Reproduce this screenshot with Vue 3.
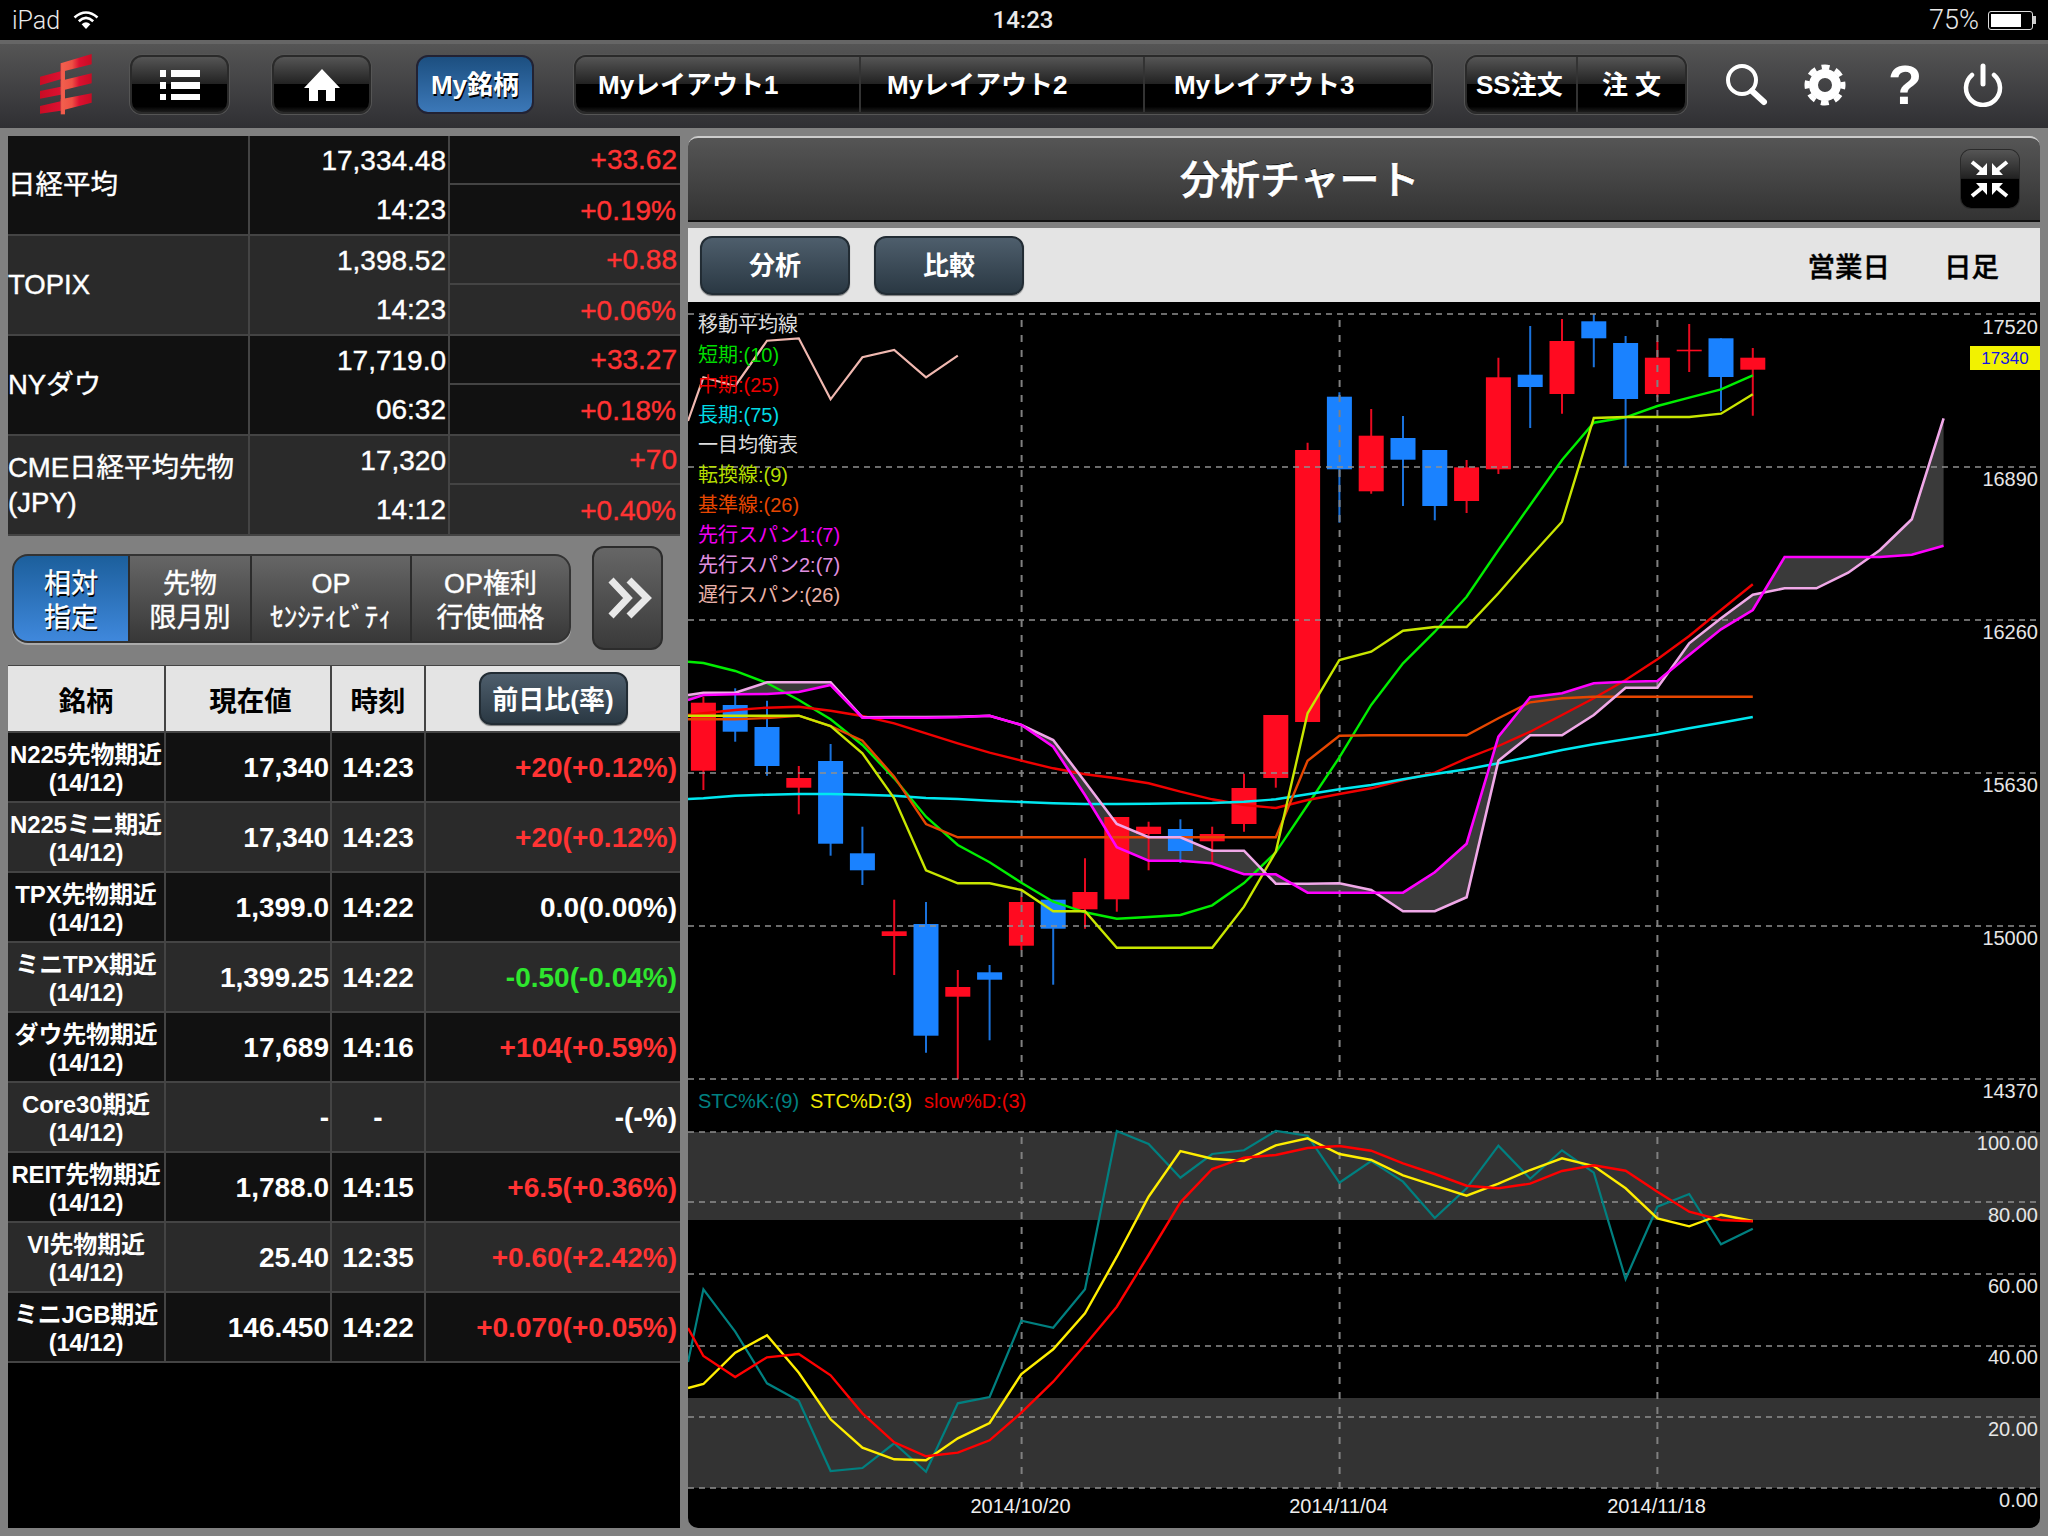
<template>
  <div class="app">
    <!-- status bar -->
    <div class="status">
      <div class="status-left">
        <span>iPad</span>
        <svg class="wifi" width="26" height="18" viewBox="0 0 26 18">
          <path d="M1.5 6.5 Q13 -3.5 24.5 6.5" fill="none" stroke="#fff" stroke-width="2.6" />
          <path d="M5.8 10.2 Q13 3.6 20.2 10.2" fill="none" stroke="#fff" stroke-width="2.6" />
          <path d="M13 18 L8.6 13.2 Q13 9.4 17.4 13.2 Z" fill="#fff" />
        </svg>
      </div>
      <div class="status-time">14:23</div>
      <div class="status-right">
        <span>75%</span>
        <div class="battery"><div class="battery-fill"></div></div>
        <div class="battery-tip"></div>
      </div>
    </div>

    <!-- nav bar -->
    <div class="nav">
      <svg class="logo" width="72" height="76" viewBox="0 0 216 228">
        <defs>
          <linearGradient id="logoGrad" gradientUnits="userSpaceOnUse" x1="30" x2="185" y1="0" y2="0">
            <stop offset="0" stop-color="#c80c24" />
            <stop offset="0.38" stop-color="#dc1030" />
            <stop offset="0.42" stop-color="#f2604e" />
            <stop offset="0.62" stop-color="#ee5044" />
            <stop offset="0.76" stop-color="#dc1030" />
            <stop offset="1" stop-color="#c80c24" />
          </linearGradient>
        </defs>
        <g fill="url(#logoGrad)">
          <path d="M92 52 L185 24 V55 L92 78 Z" />
          <path d="M92 104 L185 82 V112 L92 134 Z" />
          <path d="M92 160 L185 142 V170 L92 194 Z" />
          <path d="M30 92 L92 76 V100 L30 118 Z" />
          <path d="M30 135 L92 122 V146 L30 158 Z" />
          <path d="M30 180 L92 166 V194 L30 203 Z" />
          <path d="M92 52 H105 V205 H92 Z" />
        </g>
      </svg>

      <button class="btn-black list-btn">
        <svg width="40" height="30" viewBox="0 0 40 30">
          <path fill="#fff" d="M0 0h6v7H0zM11 0h29v7H11zM0 12h6v7H0zM11 12h29v7H11zM0 24h6v6H0zM11 24h29v6H11z" />
        </svg>
      </button>
      <button class="btn-black home-btn">
        <svg width="36" height="32" viewBox="0 0 36 32">
          <path fill="#fff" d="M18 0 L36 19 H31 V32 H22 V21 H14 V32 H5 V19 H0 Z" />
        </svg>
      </button>
      <button class="my-btn">My銘柄</button>

      <div class="layout-group">
        <div class="seg-btn layout-seg" v-for="n in 3" :key="n">Myレイアウト{{ n }}</div>
      </div>

      <div class="order-group">
        <div class="seg-btn ss-seg">SS注文</div>
        <div class="seg-btn order-seg">注 文</div>
      </div>

      <svg class="icon search" width="42" height="44" viewBox="0 0 42 44">
        <circle cx="16" cy="17" r="14" fill="none" stroke="#fff" stroke-width="4" />
        <path d="M26 28 L38 39" stroke="#fff" stroke-width="6" stroke-linecap="round" />
      </svg>
      <svg class="icon gear" width="42" height="42" viewBox="-21 -21 42 42">
        <circle r="11.5" fill="none" stroke="#fff" stroke-width="9" />
        <circle r="18" fill="none" stroke="#fff" stroke-width="5" stroke-dasharray="8 6.14" stroke-dashoffset="4" />
      </svg>
      <div class="help">?</div>
      <svg class="icon power" width="40" height="44" viewBox="0 0 40 44">
        <path d="M9 12 A17 17 0 1 0 31 12" fill="none" stroke="#fff" stroke-width="4.5" stroke-linecap="round" />
        <path d="M20 3 V21" stroke="#fff" stroke-width="5" stroke-linecap="round" />
      </svg>
    </div>

    <div class="main">
      <!-- left column -->
      <div class="left">
        <div class="index-table">
          <div v-for="row in indexes" :key="row.name" class="index-row">
            <div class="index-name" v-html="row.name"></div>
            <div class="index-values">
              <div>{{ row.price }}</div>
              <div>{{ row.time }}</div>
            </div>
            <div class="index-change">
              <div>{{ row.change }}</div>
              <div class="pct">{{ row.rate }}</div>
            </div>
          </div>
        </div>

        <div class="tabs-row">
          <div class="tabs">
            <div class="tab tab1 active">相対<br />指定</div>
            <div class="tab tab2">先物<br />限月別</div>
            <div class="tab tab3">OP<br />ｾﾝｼﾃｨﾋﾞﾃｨ</div>
            <div class="tab tab4">OP権利<br />行使価格</div>
          </div>
          <button class="more-btn">
            <svg width="44" height="42" viewBox="0 0 44 42">
              <path d="M3 3 L20 21 L3 39 M21 3 L39 21 L21 39" fill="none" stroke="#e8e8e8" stroke-width="7" />
            </svg>
          </button>
        </div>

        <div class="quote-table">
          <div class="quote-row quote-head">
            <div class="cell">銘柄</div>
            <div class="cell">現在値</div>
            <div class="cell">時刻</div>
            <div class="cell"><button class="slate-btn rate-btn">前日比(率)</button></div>
          </div>
          <div v-for="q in quotes" :key="q.name" class="quote-row">
            <div class="cell q-name">{{ q.name }}<br />(14/12)</div>
            <div class="cell q-price">{{ q.price }}</div>
            <div class="cell q-time">{{ q.time }}</div>
            <div class="cell q-change" :class="q.dir">{{ q.change }}</div>
          </div>
        </div>
      </div>

      <!-- chart panel -->
      <div class="right">
        <div class="chart-head">
          <div class="chart-title">分析チャート</div>
          <button class="compress">
            <svg width="58" height="58" viewBox="0 0 58 58">
              <g id="arrowTL">
                <path d="M11 12 L22 21" stroke="#fff" stroke-width="4" />
                <path d="M26 25 V13 L15 25 Z" fill="#fff" />
              </g>
              <use href="#arrowTL" transform="translate(57 0) scale(-1 1)" />
              <use href="#arrowTL" transform="translate(0 58) scale(1 -1)" />
              <use href="#arrowTL" transform="translate(57 58) scale(-1 -1)" />
            </svg>
          </button>
        </div>

        <div class="toolbar">
          <button class="slate-btn tool-btn">分析</button>
          <button class="slate-btn tool-btn">比較</button>
          <div class="tool-label first">営業日</div>
          <div class="tool-label">日足</div>
        </div>

        <div class="chart">
          <svg class="chart-svg" width="1352" height="1226" viewBox="688 302 1352 1226">
            <!-- stochastic bands -->
            <rect x="688" y="1132" width="1352" height="88" fill="#333" />
            <rect x="688" y="1398" width="1352" height="90" fill="#333" />

            <!-- kumo -->
            <polygon :points="cloud" fill="#3a3a3a" />

            <!-- candles -->
            <g v-for="c in candles" :key="c.i">
              <line :x1="c.x" :x2="c.x" :y1="c.high" :y2="c.low" :stroke="c.up ? '#e80a20' : '#1a72dc'" stroke-width="2" />
              <rect :x="c.x - 12.5" :y="c.top" width="25" :height="c.bottom - c.top" :fill="c.up ? '#ff0a20' : '#1a82ff'" />
            </g>

            <!-- grid -->
            <line v-for="y in hGrid" :key="'h' + y" x1="688" x2="2040" :y1="y" :y2="y" class="grid-h" />
            <g v-for="x in vGrid" :key="'v' + x">
              <line :x1="x" :x2="x" y1="320" y2="1079" class="grid-v" />
              <line :x1="x" :x2="x" y1="1137" y2="1487" class="grid-v" />
            </g>

            <!-- indicators -->
            <polyline v-for="l in lines" :key="l.color" :points="l.points" :stroke="l.color" :stroke-width="l.width" fill="none" />

            <!-- axis -->
            <text v-for="t in axis" :key="t.label" x="2038" :y="t.y" class="axis">{{ t.label }}</text>
            <rect x="1970" y="346" width="70" height="24" fill="#f2f200" />
            <text x="2005" y="364" class="tag">17340</text>
            <text v-for="d in dates" :key="d.label" :x="d.x" y="1513" class="date">{{ d.label }}</text>

            <!-- legend -->
            <text v-for="t in legend" :key="t.label" x="698" :y="t.y" :fill="t.color" class="legend">{{ t.label }}</text>
            <text x="698" y="1108" fill="#008080" class="legend">STC%K:(9)</text>
            <text x="810" y="1108" fill="#f0e800" class="legend">STC%D:(3)</text>
            <text x="924" y="1108" fill="#e80000" class="legend">slow%D:(3)</text>
          </svg>
        </div>
      </div>
    </div>
  </div>
</template>

<script setup>
const indexes = [
  { name: '日経平均', price: '17,334.48', time: '14:23', change: '+33.62', rate: '+0.19%' },
  { name: 'TOPIX', price: '1,398.52', time: '14:23', change: '+0.88', rate: '+0.06%' },
  { name: 'NYダウ', price: '17,719.0', time: '06:32', change: '+33.27', rate: '+0.18%' },
  { name: 'CME日経平均先物<br>(JPY)', price: '17,320', time: '14:12', change: '+70', rate: '+0.40%' },
]

const quotes = [
  { name: 'N225先物期近', price: '17,340', time: '14:23', change: '+20(+0.12%)', dir: 'up' },
  { name: 'N225ミニ期近', price: '17,340', time: '14:23', change: '+20(+0.12%)', dir: 'up' },
  { name: 'TPX先物期近', price: '1,399.0', time: '14:22', change: '0.0(0.00%)', dir: '' },
  { name: 'ミニTPX期近', price: '1,399.25', time: '14:22', change: '-0.50(-0.04%)', dir: 'down' },
  { name: 'ダウ先物期近', price: '17,689', time: '14:16', change: '+104(+0.59%)', dir: 'up' },
  { name: 'Core30期近', price: '-', time: '-', change: '-(-%)', dir: '' },
  { name: 'REIT先物期近', price: '1,788.0', time: '14:15', change: '+6.5(+0.36%)', dir: 'up' },
  { name: 'VI先物期近', price: '25.40', time: '12:35', change: '+0.60(+2.42%)', dir: 'up' },
  { name: 'ミニJGB期近', price: '146.450', time: '14:22', change: '+0.070(+0.05%)', dir: 'up' },
]

/* ================= CHART DATA ================= */

const xAt = i => 703.4 + 31.8 * i

// [up, high, top, bottom, low]
const ohlc = [
  [1, 696.7, 702.7, 770.7, 790], [0, 688.3, 705, 731.7, 741.7], [0, 700.7, 727, 766, 775.7],
  [1, 766, 778, 787.7, 814.3], [0, 744, 761, 843.7, 855.7], [0, 826.7, 853.3, 870.3, 885],
  [1, 899.7, 931.3, 936, 975], [0, 902, 924, 1035.7, 1052.7], [1, 970, 987, 996.7, 1079.3],
  [0, 965, 972.3, 979.7, 1040.3], [1, 896.7, 902, 945.7, 950.3], [0, 899.7, 899.7, 928.7, 984.7],
  [1, 858.3, 892, 909.3, 928.7], [1, 817, 817, 899.3, 911.7], [1, 821.7, 826.7, 834, 870.3],
  [0, 819.3, 829, 851, 863], [1, 826.7, 834, 841.3, 863], [1, 773.7, 788, 824, 831.7],
  [1, 715, 715, 778, 787.7], [1, 442.7, 450, 722, 722], [0, 392.3, 396.7, 469.3, 522.7],
  [1, 409, 435.7, 491.3, 493.7], [0, 416, 438, 459.7, 506], [0, 450, 450, 506, 520.3],
  [1, 460, 467.3, 501, 513], [1, 357.7, 377.3, 469.3, 474], [0, 326, 374.7, 387, 428],
  [1, 319, 341, 394, 413.7], [0, 314, 321.3, 338.3, 367.3], [0, 336, 343, 399, 466.7],
  [1, 341, 357.7, 394, 397.3], [1, 324, 349.7, 351.3, 372], [0, 338.3, 338.3, 377, 411],
  [1, 348, 357.7, 369.7, 415.7],
]

const candles = ohlc.map((c, i) => ({
  i,
  x: xAt(i),
  up: c[0] === 1,
  high: c[1],
  top: c[2],
  bottom: c[3],
  low: c[4],
}))

const span1 = [695, 694.3, 694, 692, 685, 717.7, 717.7, 717.7, 717.3, 715.7, 725, 746.7, 795, 847.3, 860.7, 860.7, 863.3, 874.3, 874.3, 892.7, 892.7, 892.7, 892.7, 872.3, 843.7, 736.7, 697.3, 693.3, 683.3, 681.7, 681, 655, 629.3, 610, 557, 557, 557, 557, 554.7, 545.7]
const span2 = [692.7, 692.7, 682.3, 682.3, 682.3, 717.3, 717, 717, 716.7, 715.7, 725, 740, 781.7, 824, 837.3, 837.3, 850.7, 850.7, 883.7, 883.7, 883.3, 890, 911.3, 911.3, 897.3, 760.7, 735.3, 735.3, 715, 687.7, 687.7, 643.3, 618.3, 594.7, 588.3, 588.3, 572.7, 550, 519.3, 418.3]

// first value is where the line enters at the left edge of the chart
function toPoints(start, ys) {
  const pts = ys.map((y, i) => xAt(i) + ',' + y)
  if (start !== null) pts.unshift('688,' + start)
  return pts.join(' ')
}

const cloud =
  toPoints(700, span1) + ' ' + toPoints(null, span2).split(' ').reverse().join(' ') + ' 688,695'

const lines = [
  { color: '#00ee00', width: 2.4, points: toPoints(661.7, [663, 671, 683, 700, 719.3, 745, 778.3, 816.7, 845, 862.3, 882.7, 901.7, 912.3, 918.7, 917, 915, 905.3, 883, 852.3, 805, 757.3, 705, 663.3, 631.7, 596.7, 550, 505, 460, 422.7, 417.3, 406, 397.7, 389.3, 375.3]) },
  { color: '#f00000', width: 2.4, points: toPoints(715, [713.3, 710, 707.7, 706.7, 710.7, 716, 723.3, 733.3, 743.3, 752.7, 760.7, 768.3, 774.3, 778.3, 783.3, 791.7, 799.3, 805, 808, 800, 794, 788.3, 780, 772.7, 758.3, 746, 731.7, 715, 698.3, 680, 659.3, 636, 610, 584.3]) },
  { color: '#00e8f0', width: 2.4, points: toPoints(799, [798.3, 795.7, 794.7, 794, 794, 794.7, 795.7, 798, 799, 800.7, 802, 803.3, 804, 804, 803.7, 803.3, 803, 801.7, 799.3, 794.3, 789.3, 785, 779.3, 774, 769.3, 763.3, 756.7, 750, 744.3, 739.3, 734.3, 728.3, 722.7, 717]) },
  { color: '#e64600', width: 2.4, points: toPoints(719.3, [719.3, 719.3, 718, 715.7, 726, 740.7, 776.7, 824, 837.3, 837.3, 837.3, 837.3, 837.3, 837.3, 837.3, 837.3, 837.3, 837.3, 837.3, 760.7, 735.7, 735.3, 735.3, 735.3, 735.3, 718.3, 702.3, 698.3, 696.7, 696.7, 696.7, 696.7, 696.7, 696.7]) },
  { color: '#c8e600', width: 2.4, points: toPoints(715.7, [715.7, 715.7, 715.7, 715.7, 726, 753.3, 798.3, 870.3, 883.3, 883.3, 890, 911.3, 911.3, 947.7, 947.7, 947.7, 947.7, 906.7, 851.7, 713.3, 660, 651.7, 630.7, 627, 627, 593.3, 556.7, 521.7, 418, 417, 417, 417, 413.7, 394.3]) },
  { color: '#f0a8e8', width: 2.6, points: toPoints(695, span2) },
  { color: '#ff00ff', width: 2.6, points: toPoints(700, span1) },
  { color: '#f0b8b0', width: 2.2, points: toPoints(421, [377.3, 386, 340.7, 338.3, 399.3, 357.3, 350, 377.3, 355.7]) },
  // stochastics
  { color: '#008080', width: 2.2, points: toPoints(1362, [1289.3, 1331.7, 1383.3, 1400.7, 1471, 1468, 1443.3, 1471.7, 1403.3, 1397, 1320.7, 1327.7, 1289.3, 1131, 1144, 1177.7, 1154, 1150.3, 1131, 1135.7, 1182.7, 1161, 1181.7, 1218, 1188.3, 1145.7, 1178.7, 1150.3, 1172.7, 1279, 1206.7, 1194, 1244.3, 1228.7]) },
  { color: '#ffee00', width: 2.4, points: toPoints(1388, [1384, 1352.7, 1335.3, 1372.7, 1419.3, 1447.7, 1459.3, 1460.3, 1438.3, 1423, 1374, 1349.3, 1313.3, 1256.7, 1196.7, 1151, 1158.7, 1161, 1145.3, 1138.3, 1154, 1160, 1175.3, 1185.7, 1195.7, 1183.7, 1170, 1158.3, 1166, 1188.3, 1218.3, 1226.3, 1214.7, 1221]) },
  { color: '#ff0000', width: 2.4, points: toPoints(1328, [1356, 1377, 1357.3, 1354, 1375.3, 1413.3, 1442.3, 1456.3, 1452.7, 1440.3, 1412.7, 1381.7, 1345, 1306.7, 1255, 1202.3, 1169, 1157.7, 1155, 1148, 1146, 1150.7, 1163.3, 1174, 1185.7, 1188.3, 1183.7, 1171, 1165.3, 1170.7, 1191.7, 1211.7, 1220, 1221.3]) },
]

const hGrid = [314, 467, 620, 773, 926, 1079, 1132, 1202, 1274, 1346, 1417, 1488]
const vGrid = [1021.6, 1339.6, 1657.4]

const axis = [
  { label: '17520', y: 334 },
  { label: '16890', y: 486 },
  { label: '16260', y: 639 },
  { label: '15630', y: 792 },
  { label: '15000', y: 945 },
  { label: '14370', y: 1098 },
  { label: '100.00', y: 1150 },
  { label: '80.00', y: 1222 },
  { label: '60.00', y: 1293 },
  { label: '40.00', y: 1364 },
  { label: '20.00', y: 1436 },
  { label: '0.00', y: 1507 },
]

const dates = [
  { label: '2014/10/20', x: 1020.5 },
  { label: '2014/11/04', x: 1338.5 },
  { label: '2014/11/18', x: 1656.5 },
]

const legend = [
  { label: '移動平均線', y: 332, color: '#dddddd' },
  { label: '短期:(10)', y: 362, color: '#00dd00' },
  { label: '中期:(25)', y: 392, color: '#ee0000' },
  { label: '長期:(75)', y: 422, color: '#00dce4' },
  { label: '一目均衡表', y: 452, color: '#dddddd' },
  { label: '転換線:(9)', y: 482, color: '#b4dc00' },
  { label: '基準線:(26)', y: 512, color: '#e64600' },
  { label: '先行スパン1:(7)', y: 542, color: '#f000f0' },
  { label: '先行スパン2:(7)', y: 572, color: '#e090e0' },
  { label: '遅行スパン:(26)', y: 602, color: '#e8b0a8' },
]
</script>

<style scoped>
.app {
  width: 2048px;
  height: 1536px;
  background: #808080;
  display: flex;
  flex-direction: column;
  overflow: hidden;
  font-family: "Liberation Sans", "Noto Sans CJK JP", sans-serif;
}

button {
  font-family: inherit;
  padding: 0;
  margin: 0;
  cursor: pointer;
}

/* ================= STATUS ================= */

.status {
  height: 40px;
  background: #000;
  color: #e8e8e8;
  display: grid;
  grid-template-columns: 1fr auto 1fr;
  align-items: center;
  font-family: Roboto, "Liberation Sans", sans-serif;
  font-size: 25px;
  font-weight: 300;
}

.status-left {
  display: flex;
  align-items: center;
  gap: 13px;
  padding-left: 12px;
}

.status-time {
  font-size: 24px;
  font-weight: 500;
  margin-right: 2px;
}

.status-right {
  display: flex;
  align-items: center;
  justify-content: flex-end;
  padding-right: 12px;
  font-size: 27px;
}

.battery {
  width: 45px;
  height: 19px;
  margin-left: 9px;
  border: 1.5px solid #ddd;
  border-radius: 3px;
  box-sizing: border-box;
  padding: 2px;
}

.battery-fill {
  width: 30px;
  height: 100%;
  background: #fff;
}

.battery-tip {
  width: 3px;
  height: 8px;
  background: #ccc;
}

/* ================= NAV ================= */

.nav {
  height: 88px;
  box-sizing: border-box;
  border-top: 4px solid #666;
  background: linear-gradient(#555, #2f2f33);
  display: flex;
  align-items: center;
  color: #fff;
  position: relative;
}

.logo {
  margin-left: 30px;
  margin-top: -4px;
  flex: none;
}

.btn-black,
.seg-btn {
  background: linear-gradient(#555 0%, #222 49%, #000 50%, #000 90%, #1c1c1c 100%);
}

.btn-black {
  width: 99px;
  height: 59px;
  border: 2px solid #2a2a2a;
  border-radius: 12px;
  box-shadow: 0 0 0 1px #555;
  display: flex;
  align-items: center;
  justify-content: center;
  margin-top: -3px;
}

.list-btn {
  margin-left: 28px;
}

.home-btn {
  margin-left: 43px;
}

.my-btn {
  width: 118px;
  height: 59px;
  margin-left: 45px;
  margin-top: -3px;
  padding-bottom: 5px;
  border: 2px solid #223;
  border-radius: 12px;
  background: linear-gradient(#1c4f80, #3c78b8);
  color: #fff;
  font-size: 26px;
  font-weight: 700;
  text-shadow: 1px 2px 0 #000;
}

.layout-group,
.order-group {
  display: flex;
  height: 59px;
  margin-top: -3px;
  border: 2px solid #2a2a2a;
  border-radius: 12px;
  overflow: hidden;
  box-shadow: 0 0 0 1px #555;
  box-sizing: border-box;
}

.layout-group {
  width: 859px;
  margin-left: 40px;
}

.order-group {
  width: 222px;
  margin-left: 32px;
}

.seg-btn {
  display: flex;
  align-items: center;
  padding-bottom: 5px;
  font-size: 26px;
  font-weight: 700;
  box-sizing: border-box;
}

.layout-seg {
  width: 285px;
  flex: none;
  padding-left: 22px;
  border-right: 2px solid #333;
}

.layout-seg:nth-child(2) {
  width: 284px;
  padding-left: 26px;
}

.layout-seg:nth-child(3) {
  flex: 1;
  padding-left: 29px;
  border-right: none;
}

.ss-seg {
  width: 111px;
  padding-left: 9px;
  border-right: 2px solid #333;
}

.order-seg {
  flex: 1;
  justify-content: center;
}

.icon {
  flex: none;
  margin-top: -3px;
}

.search {
  margin-left: 39px;
}

.gear {
  margin-left: 36px;
}

.help {
  margin-left: 42px;
  margin-top: -3px;
  font-size: 56px;
  font-weight: 700;
  line-height: 56px;
  width: 34px;
}

.power {
  margin-left: 41px;
}

/* ================= MAIN ================= */

.main {
  flex: 1;
  display: flex;
  padding: 8px 8px 8px 8px;
  gap: 8px;
  min-height: 0;
}

.left {
  width: 672px;
  display: flex;
  flex-direction: column;
}

.index-table {
  color: #fff;
  font-size: 28px;
  -webkit-text-stroke: 0.4px currentColor;
}

.index-row {
  display: grid;
  grid-template-columns: 242px 200px 1fr;
  height: 100px;
  box-sizing: border-box;
  border-bottom: 2px solid #444;
  background: #111;
}

.index-row:nth-child(even) {
  background: #2a2a2a;
}

.index-name {
  border-right: 2px solid #444;
  font-size: 27.5px;
  line-height: 35px;
  align-self: stretch;
  padding-top: 31px;
}

.index-row:nth-child(4) .index-name {
  padding-top: 14px;
}

.index-values,
.index-change {
  display: grid;
  grid-template-rows: 1fr 1fr;
  text-align: right;
  align-items: center;
}

.index-values {
  border-right: 2px solid #444;
  padding-right: 2px;
}

.index-change {
  color: #f33;
}

.index-change > div {
  height: 100%;
  display: flex;
  align-items: center;
  justify-content: flex-end;
  padding-right: 3px;
  box-sizing: border-box;
}

.index-change > div:first-child {
  border-bottom: 2px solid #444;
}

.index-change .pct {
  padding-right: 4px;
  padding-top: 3px;
}

.tabs-row {
  display: flex;
  align-items: center;
  height: 104px;
  margin-top: 10px;
}

.tabs {
  width: 559px;
  height: 89px;
  margin-left: 4px;
  display: flex;
  box-sizing: border-box;
  border: 2px solid #333;
  border-radius: 16px;
  overflow: hidden;
  background: #333;
  box-shadow: 0 2px 0 #aaa;
  color: #fff;
  font-size: 27px;
  line-height: 34px;
  text-align: center;
  -webkit-text-stroke: 0.4px currentColor;
}

.tab {
  display: flex;
  align-items: center;
  justify-content: center;
  padding-top: 6px;
  background: linear-gradient(#666, #383838);
  border-right: 2px solid #2c2c2c;
  box-sizing: border-box;
}

.tab.active {
  background: linear-gradient(#1c5f9c, #3f88dc);
  text-shadow: 1px 2px 0 #000;
}

.tab1 {
  width: 116px;
}

.tab2 {
  width: 122px;
}

.tab3 {
  width: 160px;
}

.tab4 {
  flex: 1;
  border-right: none;
}

.more-btn {
  width: 71px;
  height: 104px;
  margin-left: 21px;
  padding-left: 4px;
  background: linear-gradient(#666, #3a3a3a);
  border: 2px solid #2c2c2c;
  border-radius: 12px;
  display: flex;
  align-items: center;
  justify-content: center;
}

.quote-table {
  flex: 1;
  margin-top: 15px;
  background: #000;
}

.quote-row {
  display: grid;
  grid-template-columns: 158px 166px 94px 1fr;
  height: 70px;
  box-sizing: border-box;
  border-bottom: 2px solid #444;
  background: #111;
  color: #fff;
  font-weight: 700;
}

.quote-row:nth-child(odd) {
  background: #2a2a2a;
}

.quote-row.quote-head {
  height: 68px;
  background: #e4e4e4;
  border-top: 1px solid #444;
  color: #000;
  font-size: 27.5px;
}

.quote-head .cell {
  justify-content: center;
}

.quote-head .cell:nth-child(2) {
  padding-left: 5px;
}

.cell {
  display: flex;
  align-items: center;
  border-right: 2px solid #444;
  box-sizing: border-box;
}

.cell:last-child {
  border-right: none;
}

.q-name {
  display: block;
  text-align: center;
  font-size: 24px;
  line-height: 28px;
  padding-top: 8px;
  white-space: nowrap;
  letter-spacing: -0.2px;
}

.q-price,
.q-time,
.q-change {
  padding-top: 2px;
  font-size: 28px;
}

.q-price {
  justify-content: flex-end;
  padding-right: 1px;
}

.q-time {
  justify-content: center;
}

.q-change {
  justify-content: flex-end;
  padding-right: 3px;
}

.q-change.up {
  color: #f33;
}

.q-change.down {
  color: #2ee62e;
}

.slate-btn {
  background: linear-gradient(#4e5e6c, #2a3843);
  border: 2px solid #222c34;
  border-radius: 12px;
  color: #fff;
  font-size: 26px;
  font-weight: 700;
  box-shadow: 0 1px 1px #777;
}

.rate-btn {
  width: 149px;
  height: 53px;
  padding-bottom: 2px;
}

/* ================= CHART ================= */

.right {
  width: 1352px;
  display: flex;
  flex-direction: column;
}

.chart-head {
  height: 86px;
  box-sizing: border-box;
  border-top: 2px solid #ccc;
  border-bottom: 2px solid #111;
  border-radius: 10px 10px 0 0;
  background: linear-gradient(#555, #333);
  display: flex;
  align-items: center;
  color: #fff;
}

.chart-title {
  margin-left: 492px;
  padding-bottom: 5px;
  font-size: 40px;
  font-weight: 500;
  -webkit-text-stroke: 0.6px #fff;
  text-shadow: 0 -1px 0 #000;
}

.compress {
  width: 58px;
  height: 58px;
  margin-left: auto;
  margin-right: 21px;
  border: none;
  border-radius: 10px;
  background: linear-gradient(#555 0%, #222 49%, #000 50%);
  box-shadow: 0 0 0 1px #2a2a2a;
  display: block;
}

.toolbar {
  height: 74px;
  margin-top: 6px;
  background: #e4e4e4;
  display: flex;
  align-items: center;
  gap: 24px;
  padding: 0 41px 0 12px;
}

.tool-btn {
  width: 150px;
  height: 59px;
  padding-bottom: 3px;
}

.tool-label {
  color: #000;
  font-size: 27.5px;
  font-weight: 500;
  margin-left: 30px;
  -webkit-text-stroke: 0.4px #000;
}

.tool-label.first {
  margin-left: auto;
}

.chart {
  flex: 1;
  background: #000;
  border-radius: 0 0 10px 10px;
  overflow: hidden;
}

.chart-svg {
  display: block;
}

.grid-h {
  stroke: #909090;
  stroke-width: 1.6;
  stroke-dasharray: 6 5;
}

.grid-v {
  stroke: #808080;
  stroke-width: 2;
  stroke-dasharray: 7 8;
}

.axis,
.legend,
.date {
  font-size: 20px;
}

.axis {
  fill: #e6e6e6;
  text-anchor: end;
}

.date {
  fill: #eee;
  text-anchor: middle;
}

.tag {
  fill: #1414e0;
  text-anchor: middle;
  font-size: 17px;
}
</style>
